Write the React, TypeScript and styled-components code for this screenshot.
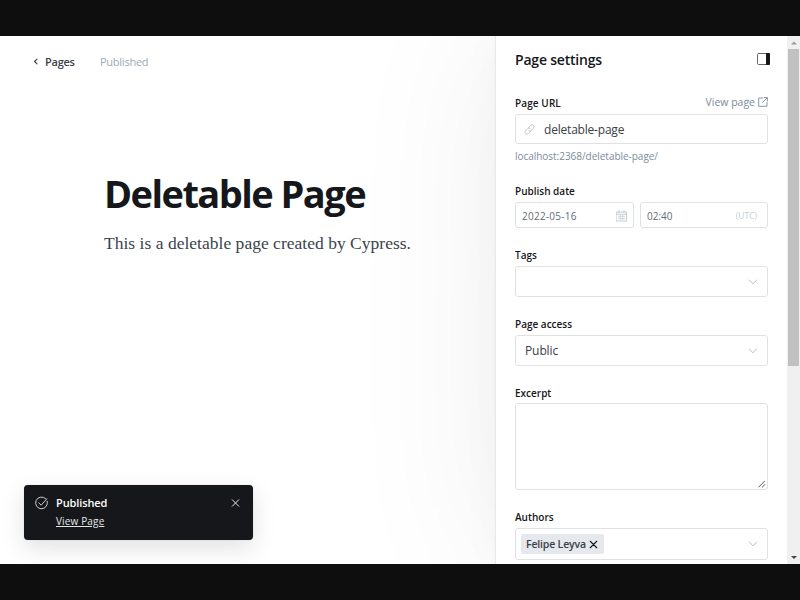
import React from 'react';
import styled, { createGlobalStyle } from 'styled-components';

const sans = '"Open Sans", "Noto Sans", sans-serif';

const GlobalStyle = createGlobalStyle`
  * { box-sizing: border-box; }
  body { margin: 0; overflow: hidden; background: #0e0e0e; font-family: ${sans}; }
`;

const Frame = styled.div`
  width: 800px;
  height: 600px;
  padding: 36px 0;
  background: #0e0e0e;
`;

const Screen = styled.main`
  display: flex;
  height: 528px;
  overflow: hidden;
  background: #fff;
  position: relative;
`;

const Editor = styled.section`
  width: 496px;
  flex: none;
`;

const TopBar = styled.nav`
  display: flex;
  align-items: center;
  height: 20px;
  margin: 15px 0 0 33px;
`;

interface TextProps {
  $size: number;
  $weight?: number;
  $color?: string;
  $spacing?: number;
}

const Text = styled.span<TextProps>`
  font-size: ${(p) => p.$size}px;
  font-weight: ${(p) => p.$weight ?? 400};
  color: ${(p) => p.$color ?? '#15171a'};
  letter-spacing: ${(p) => p.$spacing ?? 0}px;
  white-space: nowrap;
`;

const BackLink = styled.div`
  display: flex;
  align-items: center;
  gap: 7px;
  width: 67px;
`;

const Title = styled.h1`
  margin: 96px 0 0 104px;
  font-size: 38px;
  line-height: 52px;
  font-weight: 700;
  letter-spacing: -1.55px;
  color: #15171a;
  white-space: nowrap;
`;

const Body = styled.p`
  margin: 12px 0 0 104px;
  font-family: "Liberation Serif", serif;
  font-size: 17.5px;
  line-height: 24px;
  letter-spacing: 0.02px;
  color: #3b444c;
  white-space: nowrap;
`;

const Panel = styled.aside`
  width: 292px;
  flex: none;
  padding: 13px 19px 0;
  background: #fff;
  border-left: 1px solid #e9e9e9;
  margin-left: -1px;
  box-shadow: 0 0 2px rgba(0, 0, 0, 0.04), 0 0 40px rgba(0, 0, 0, 0.03), 0 0 160px rgba(0, 0, 0, 0.07);
`;

const PanelHeader = styled.header`
  display: flex;
  align-items: center;
  justify-content: space-between;
  height: 20px;
  margin-right: -2px;
  margin-bottom: 26px;
`;

const Field = styled.div<{ $gap: number }>`
  margin-bottom: ${(p) => p.$gap}px;
`;

const LabelRow = styled.div`
  display: flex;
  align-items: center;
  justify-content: space-between;
  height: 16px;
  margin-bottom: 3px;
`;

const ViewLink = styled.span`
  display: flex;
  align-items: center;
  gap: 3px;
  margin-top: -3px;
`;

const InputBox = styled.div<{ $height: number; $width?: number; $pad?: string }>`
  display: flex;
  align-items: center;
  justify-content: space-between;
  width: ${(p) => (p.$width ? `${p.$width}px` : '100%')};
  height: ${(p) => p.$height}px;
  padding: ${(p) => p.$pad ?? '0 9px'};
  border: 1px solid #dfe2e5;
  border-radius: 3px;
  background: #fff;
`;

const Slug = styled.div`
  display: flex;
  align-items: center;
  gap: 9px;
`;

const Hint = styled.div`
  display: flex;
  align-items: center;
  height: 16px;
  margin-top: 4px;
`;

const DateRow = styled.div`
  display: flex;
  justify-content: space-between;
`;

const TextArea = styled.div`
  display: flex;
  align-items: flex-end;
  justify-content: flex-end;
  height: 87px;
  margin-top: -1px;
  padding: 0 1px 1px 0;
  border: 1px solid #dfe2e5;
  border-radius: 3px;
`;

const Token = styled.span`
  display: flex;
  align-items: center;
  gap: 3px;
  height: 20px;
  width: 83px;
  padding-left: 5px;
  border-radius: 2px;
  background: #e5e9ed;
`;

const Scrollbar = styled.div`
  display: flex;
  flex-direction: column;
  align-items: center;
  width: 13px;
  height: 528px;
  background: #f0f0f0;
`;

const ScrollButton = styled.div`
  display: flex;
  align-items: center;
  justify-content: center;
  height: 13px;
`;

const Thumb = styled.div`
  width: 11px;
  height: 317px;
  margin-bottom: auto;
  background: #c1c1c1;
`;

const Toast = styled.div`
  position: absolute;
  left: 24px;
  top: 449px;
  display: flex;
  align-items: flex-start;
  width: 229px;
  height: 55px;
  padding: 9px 12px 0 11px;
  border-radius: 4px;
  background: #15171a;
  box-shadow: 0 0 1px rgba(0, 0, 0, 0.3), 0 8px 24px rgba(0, 0, 0, 0.12);
`;

const ToastText = styled.div`
  display: flex;
  flex-direction: column;
  flex: 1;
  margin-left: 8px;
  line-height: 18px;
`;

const Underlined = styled(Text)`
  text-decoration: underline;
  text-underline-offset: 1px;
  text-decoration-thickness: 1px;
`;

const Svg = styled.svg`
  display: block;
  flex: none;
  fill: none;
  stroke-linecap: round;
  stroke-linejoin: round;
`;

const Chevron = () => (
  <Svg width="10" height="6" viewBox="0 0 10 6" stroke="#b3bcc4">
    <path d="M1.3 1 5 4.8 8.7 1" />
  </Svg>
);

const Cross = ({ color, size }: { color: string; size: number }) => (
  <Svg width={size} height={size} viewBox="0 0 8 8" stroke={color} strokeWidth="1">
    <path d="M1.1 1.1 6.9 6.9M6.9 1.1 1.1 6.9" />
  </Svg>
);

const Label = ({ children, spacing = 0 }: { children: string; spacing?: number }) => (
  <Text $size={10} $weight={600} $spacing={spacing}>{children}</Text>
);

export default function App() {
  return (
    <>
      <GlobalStyle />
      <Frame>
        <Screen>
          <Editor>
            <TopBar>
              <BackLink>
                <Svg width="5" height="8" viewBox="0 0 5 8" stroke="#394047" strokeWidth="1.1">
                  <path d="M4 2.1 1.6 4.5 4 6.9" />
                </Svg>
                <Text $size={11} $weight={600} $color="#394047" $spacing={-0.25}>Pages</Text>
              </BackLink>
              <Text $size={11} $color="#9baab6" $spacing={-0.25}>Published</Text>
            </TopBar>
            <Title>Deletable Page</Title>
            <Body>This is a deletable page created by Cypress.</Body>
          </Editor>
          <Panel>
            <PanelHeader>
              <Text $size={14} $weight={600} $spacing={-0.2}>Page settings</Text>
              <Svg width="13" height="12" viewBox="0 0 13 12">
                <rect x=".5" y=".5" width="12" height="11" rx="1" stroke="#62666b" />
                <path d="M9 0h3q1 0 1 1v10q0 1-1 1H9z" fill="#15171a" />
              </Svg>
            </PanelHeader>
            <Field $gap={19}>
              <LabelRow>
                <Label spacing={0.1}>Page URL</Label>
                <ViewLink>
                  <Text $size={10.5} $color="#7c8b9a">View page</Text>
                  <Svg width="10" height="10" viewBox="0 0 10 10" stroke="#7c8b9a" strokeWidth=".9">
                    <path d="M4.5 1H.7v8.3H9V5.5M6 .6h3.4V4M9.2.8 4.5 5.5" />
                  </Svg>
                </ViewLink>
              </LabelRow>
              <InputBox $height={30} $pad="0 8px">
                <Slug>
                  <Svg width="11" height="11" viewBox="0 0 10 10" stroke="#bcc2c8" strokeWidth=".8">
                    <path d="M4.2 3.2 6 1.3a1.75 1.75 0 0 1 2.6 2.5L6.6 5.9a1.7 1.7 0 0 1-2.4 0M5.8 6.8 4 8.7a1.75 1.75 0 0 1-2.6-2.5l2-2.1a1.7 1.7 0 0 1 2.4 0" />
                  </Svg>
                  <Text $size={12} $color="#394047" $spacing={-0.2}>deletable-page</Text>
                </Slug>
              </InputBox>
              <Hint><Text $size={10} $color="#7c8b9a" $spacing={-0.03}>localhost:2368/deletable-page/</Text></Hint>
            </Field>
            <Field $gap={19}>
              <LabelRow><Label>Publish date</Label></LabelRow>
              <DateRow>
                <InputBox $height={26} $width={119} $pad="1px 6px 0">
                  <Text $size={10} $color="#5f6b76" $spacing={0.25}>2022-05-16</Text>
                  <Svg width="11" height="12" viewBox="0 0 11 12" stroke="#b8c0c8" strokeWidth=".8">
                    <path d="M.5 2h10v9H.5zM.5 4.2h10M3 .5v2M8 .5v2" />
                    <path d="M2.3 6.3h6.4M2.3 8.6h6.4M4.2 5.3v4.5M6.8 5.3v4.5" strokeWidth=".6" />
                  </Svg>
                </InputBox>
                <InputBox $height={26} $width={128} $pad="1px 10px 0 6px">
                  <Text $size={10} $color="#5f6b76">02:40</Text>
                  <Text $size={8.5} $color="#c5ccd3">(UTC)</Text>
                </InputBox>
              </DateRow>
            </Field>
            <Field $gap={19}>
              <LabelRow><Label>Tags</Label></LabelRow>
              <InputBox $height={31}><span /><Chevron /></InputBox>
            </Field>
            <Field $gap={19}>
              <LabelRow><Label>Page access</Label></LabelRow>
              <InputBox $height={31}>
                <Text $size={12} $color="#394047" $spacing={-0.1}>Public</Text>
                <Chevron />
              </InputBox>
            </Field>
            <Field $gap={19}>
              <LabelRow><Label>Excerpt</Label></LabelRow>
              <TextArea>
                <Svg width="8" height="8" viewBox="0 0 8 8" stroke="#555" strokeWidth="1">
                  <path d="M.8 7 6.5 1.3M4.3 7 6.8 4.5" />
                </Svg>
              </TextArea>
            </Field>
            <Field $gap={0}>
              <LabelRow><Label>Authors</Label></LabelRow>
              <InputBox $height={32} $pad="0 9px 0 5px">
                <Token>
                  <Text $size={10.5} $weight={600} $color="#394047" $spacing={-0.17}>Felipe Leyva</Text>
                  <Cross color="#15171a" size={9} />
                </Token>
                <Chevron />
              </InputBox>
            </Field>
          </Panel>
          <Scrollbar>
            <ScrollButton>
              <Svg width="6" height="4" viewBox="0 0 6 4"><path d="M0 3.5 3 .5 6 3.5z" fill="#9a9a9a" /></Svg>
            </ScrollButton>
            <Thumb />
            <ScrollButton>
              <Svg width="6" height="6" viewBox="0 0 6 6"><path d="M0 1 3 4 6 1z" fill="#444" /></Svg>
            </ScrollButton>
          </Scrollbar>
          <Toast>
            <Svg width="13" height="18" viewBox="0 0 13 18" stroke="#dfe1e3" strokeWidth=".9">
              <path d="M12.2 7.2A5.9 5.9 0 1 1 10.6 4.6M3.7 8.8l2.4 2.4 5.8-6.4" />
            </Svg>
            <ToastText>
              <Text $size={11} $weight={600} $color="#fff" $spacing={-0.1}>Published</Text>
              <Underlined $size={10} $color="#e4e6e8" $spacing={0.15}>View Page</Underlined>
            </ToastText>
            <Svg width="11" height="18" viewBox="0 0 11 18" stroke="#e5e7e9">
              <path d="M2.3 5.8 8.7 12.2M8.7 5.8 2.3 12.2" />
            </Svg>
          </Toast>
        </Screen>
      </Frame>
    </>
  );
}
